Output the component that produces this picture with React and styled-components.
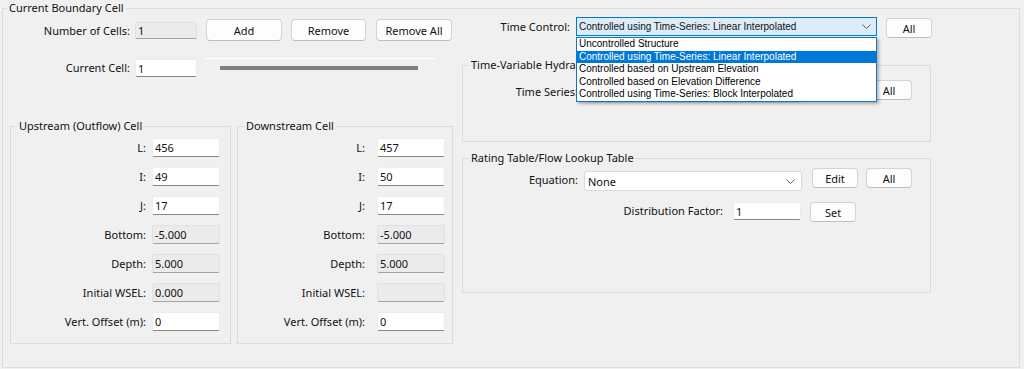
import React from "react";
import styled, { createGlobalStyle } from "styled-components";

const GlobalStyle = createGlobalStyle`
  html, body {
    margin: 0;
    padding: 0;
    background: #f0f0f0;
  }
  body {
    font-family: "Noto Sans", "Open Sans", sans-serif;
    font-size: 11px;
    color: #111111;
  }
`;

const Dialog = styled.div`
  width: 1024px;
  height: 369px;
  overflow: hidden;
  background: #f0f0f0;
`;

const Group = styled.fieldset`
  box-sizing: border-box;
  min-width: 0;
  margin: ${(p) => p.$margin || "0"};
  padding: ${(p) => p.$padding || "0"};
  width: ${(p) => p.$w}px;
  height: ${(p) => p.$h}px;
  border: 1px solid #dcdcdc;
  flex-shrink: 0;
`;

const Legend = styled.legend`
  margin-left: ${(p) => p.$indent ?? 6}px;
  padding: 0 2px;
  line-height: 16px;
  font-size: 11px;
  color: #111111;
`;

const Columns = styled.div`
  display: flex;
`;

const LeftCol = styled.div`
  width: 459px;
  flex-shrink: 0;
`;

const RightCol = styled.div`
  width: 470px;
  flex-shrink: 0;
`;

const Row = styled.div`
  display: flex;
  align-items: ${(p) => p.$align || "center"};
  height: ${(p) => p.$h}px;
  margin-top: ${(p) => p.$mt || 0}px;
`;

const Label = styled.label`
  flex-shrink: 0;
  width: ${(p) => p.$w}px;
  text-align: right;
  white-space: nowrap;
  line-height: ${(p) => p.$lh || 19}px;
`;

const Field = styled.input`
  box-sizing: border-box;
  flex-shrink: 0;
  width: ${(p) => p.$w || 68}px;
  height: ${(p) => p.$h || 19}px;
  margin: ${(p) => p.$mt || 0}px 0 0 ${(p) => p.$ml || 0}px;
  padding: 0 2px;
  font-family: "Noto Sans", "Open Sans", sans-serif;
  font-size: 11px;
  color: #111111;
  background: ${(p) => (p.$ro ? "#ebebeb" : "#ffffff")};
  border: 1px solid ${(p) => (p.$ro ? "#e1e1e1" : "#ececec")};
  border-bottom-color: ${(p) => (p.$ro ? "#a3a3a3" : "#878787")};
  border-radius: 2px;
  outline: none;
`;

const Button = styled.button`
  box-sizing: border-box;
  flex-shrink: 0;
  width: ${(p) => p.$w || 46}px;
  height: ${(p) => p.$h || 20}px;
  margin: ${(p) => p.$mt || 0}px 0 0 ${(p) => p.$ml || 0}px;
  padding: 0;
  font-family: "Noto Sans", "Open Sans", sans-serif;
  font-size: 11px;
  color: #111111;
  background: #fdfdfd;
  border: 1px solid #d3d3d3;
  border-bottom-color: #bdbdbd;
  border-radius: 4px;
`;

const Slider = styled.div`
  box-sizing: border-box;
  flex-shrink: 0;
  width: 231px;
  height: 20px;
  margin-left: 7px;
  border-top: 1px solid #ffffff;
`;

const SliderTrack = styled.div`
  width: 198px;
  height: 4px;
  margin: 7px 0 0 16px;
  background: #7e7e7e;
`;

const ComboWrap = styled.div`
  position: relative;
  flex-shrink: 0;
  margin: ${(p) => p.$mt || 0}px 0 0 ${(p) => p.$ml || 0}px;
`;

const Combo = styled.div`
  box-sizing: border-box;
  display: flex;
  align-items: center;
  justify-content: space-between;
  width: ${(p) => p.$w}px;
  height: ${(p) => p.$h || 20}px;
  padding: 0 ${(p) => p.$pr || 6}px 0 ${(p) => p.$pl || 2}px;
  background: ${(p) => (p.$focused ? "#dcecf9" : "#ffffff")};
  border: 1px solid ${(p) => (p.$focused ? "#0078d7" : "#d9d9d9")};
  border-radius: ${(p) => (p.$focused ? 0 : 3)}px;
  font-family: ${(p) =>
    p.$small ? '"Liberation Sans", Arial, sans-serif' : '"Noto Sans", "Open Sans", sans-serif'};
  font-size: ${(p) => (p.$small ? 10 : 11)}px;
  white-space: nowrap;
`;

const DropList = styled.ul`
  position: absolute;
  z-index: 10;
  top: 20px;
  left: 0;
  box-sizing: border-box;
  width: 301px;
  margin: 0;
  padding: 0;
  list-style: none;
  background: #ffffff;
  border: 1px solid #0078d7;
  box-shadow: 2px 2px 3px rgba(0, 0, 0, 0.28);
  font-family: "Liberation Sans", Arial, sans-serif;
  font-size: 10px;
`;

const DropItem = styled.li`
  height: 12.5px;
  line-height: 12.5px;
  padding-left: 2px;
  white-space: nowrap;
  color: ${(p) => (p.$selected ? "#ffffff" : "#000000")};
  background: ${(p) => (p.$selected ? "#0078d7" : "transparent")};
`;

const FieldList = styled.div`
  display: flex;
  flex-direction: column;
  gap: 10px;
  padding-top: 4px;
`;

function Chevron() {
  return (
    <svg width="9" height="5" viewBox="0 0 9 5">
      <path d="M0.5 0.5 L4.5 4.5 L8.5 0.5" fill="none" stroke="#606060" strokeWidth="1" />
    </svg>
  );
}

const upstream = [
  { label: "L:", value: "456" },
  { label: "I:", value: "49" },
  { label: "J:", value: "17" },
  { label: "Bottom:", value: "-5.000", ro: true },
  { label: "Depth:", value: "5.000", ro: true },
  { label: "Initial WSEL:", value: "0.000", ro: true },
  { label: "Vert. Offset (m):", value: "0" },
];

const downstream = [
  { label: "L:", value: "457" },
  { label: "I:", value: "50" },
  { label: "J:", value: "17" },
  { label: "Bottom:", value: "-5.000", ro: true },
  { label: "Depth:", value: "5.000", ro: true },
  { label: "Initial WSEL:", value: "", ro: true },
  { label: "Vert. Offset (m):", value: "0" },
];

const timeOptions = [
  "Uncontrolled Structure",
  "Controlled using Time-Series: Linear Interpolated",
  "Controlled based on Upstream Elevation",
  "Controlled based on Elevation Difference",
  "Controlled using Time-Series: Block Interpolated",
];

function CellGroup({ title, rows, labelW, gap, margin, w }) {
  return (
    <Group $w={w} $h={226} $margin={margin}>
      <Legend>{title}</Legend>
      <FieldList>
        {rows.map((r) => (
          <Row key={r.label} $h={19}>
            <Label $w={labelW}>{r.label}</Label>
            <Field $ml={gap} $ro={r.ro} readOnly defaultValue={r.value} />
          </Row>
        ))}
      </FieldList>
    </Group>
  );
}

export default function App() {
  return (
    <Dialog>
      <GlobalStyle />
      <Group $w={1018} $h={368} $margin="0 0 0 2px">
        <Legend $indent={4}>Current Boundary Cell</Legend>
        <Columns>
          <LeftCol>
            <Row $h={22} $mt={3}>
              <Label $w={127}>Number of Cells:</Label>
              <Field $w={62} $h={17} $ml={5} $ro readOnly defaultValue="1" />
              <Button $w={76} $h={22} $ml={9}>Add</Button>
              <Button $w={75} $h={22} $ml={9}>Remove</Button>
              <Button $w={76} $h={22} $ml={10}>Remove All</Button>
            </Row>
            <Row $h={20} $mt={17} $align="flex-start">
              <Label $w={127} $lh={20}>Current Cell:</Label>
              <Field $w={62} $h={18} $ml={5} $mt={1} readOnly defaultValue="1" />
              <Slider>
                <SliderTrack />
              </Slider>
            </Row>
            <Row $h={226} $mt={40} $align="flex-start">
              <CellGroup
                title="Upstream (Outflow) Cell"
                rows={upstream}
                labelW={135}
                gap={6}
                w={221}
                margin="0 0 0 7px"
              />
              <CellGroup
                title="Downstream Cell"
                rows={downstream}
                labelW={127}
                gap={12}
                w={216}
                margin="0 0 0 6px"
              />
            </Row>
          </LeftCol>
          <RightCol>
            <Row $h={21} $mt={1} $align="flex-start">
              <Label $w={108}>Time Control:</Label>
              <ComboWrap $ml={6}>
                <Combo $w={301} $h={19} $focused $small $pr={5}>
                  <span>Controlled using Time-Series: Linear Interpolated</span>
                  <Chevron />
                </Combo>
                <DropList>
                  {timeOptions.map((o, i) => (
                    <DropItem key={o} $selected={i === 1}>
                      {o}
                    </DropItem>
                  ))}
                </DropList>
              </ComboWrap>
              <Button $ml={9} $mt={1}>All</Button>
            </Row>
            <Group $w={469} $h={85} $margin="19px 0 0 0" $padding="7px 0 0 0">
              <Legend>Time-Variable Hydraulics</Legend>
              <Row $h={23} $align="flex-start">
                <Label $w={115} $lh={23}>Time Series:</Label>
                <ComboWrap $ml={6} $mt={3}>
                  <Combo $w={218} $pl={3}>
                    <span />
                    <Chevron />
                  </Combo>
                </ComboWrap>
                <Button $ml={10}>Edit</Button>
                <Button $ml={8}>All</Button>
              </Row>
            </Group>
            <Group $w={469} $h={143} $margin="8px 0 0 0" $padding="2px 0 0 0">
              <Legend>Rating Table/Flow Lookup Table</Legend>
              <Row $h={23} $align="flex-start">
                <Label $w={115} $lh={23}>Equation:</Label>
                <ComboWrap $ml={6} $mt={3}>
                  <Combo $w={218} $pl={3}>
                    <span>None</span>
                    <Chevron />
                  </Combo>
                </ComboWrap>
                <Button $ml={10}>Edit</Button>
                <Button $ml={8}>All</Button>
              </Row>
              <Row $h={20} $mt={11} $align="flex-start">
                <Label $w={260} $lh={18}>Distribution Factor:</Label>
                <Field $w={68} $h={18} $ml={10} readOnly defaultValue="1" />
                <Button $ml={9}>Set</Button>
              </Row>
            </Group>
          </RightCol>
        </Columns>
      </Group>
    </Dialog>
  );
}
